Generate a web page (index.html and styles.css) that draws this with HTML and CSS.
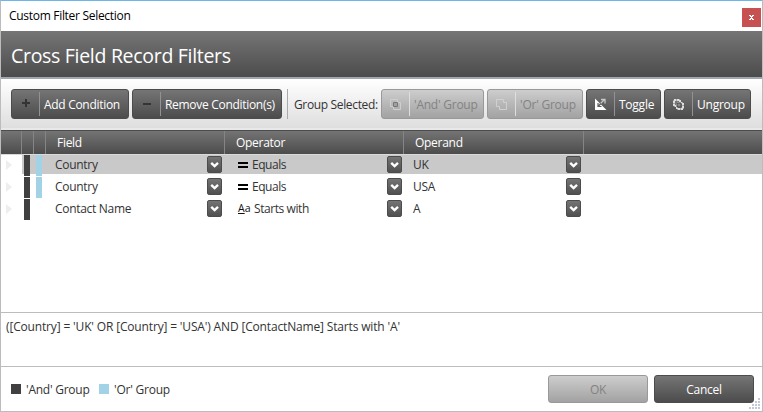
FILE: index.html
```html
<!DOCTYPE html>
<html lang="en">
<head>
<meta charset="utf-8">
<title>Custom Filter Selection</title>
<link rel="stylesheet" href="styles.css">
</head>
<body>
<svg class="defs" width="0" height="0"><defs>
<symbol id="chev" viewBox="0 0 15 17"><path d="M4.2 6.8 7.6 10l3.4-3.2" fill="none" stroke="#fff" stroke-width="2.4"/></symbol>
</defs></svg>
<div class="window">
  <div class="titlebar"><span class="t-title">Custom Filter Selection</span><button class="close"><svg width="19" height="19" viewBox="0 0 19 19"><path d="M7 7h2v1h1V7h2v1h-1v1h-1v1h1v1h1v1h-2v-1H9v1H7v-1h1v-1h1V9H8V8H7z" fill="#fff"/></svg></button></div>
  <div class="heading"><h1>Cross Field Record Filters</h1></div>
  <div class="toolbar">
    <button class="btn add"><span class="icon"><svg width="27" height="28" viewBox="0 0 27 28"><path d="M10 13h8M14 9v8" stroke="#343434" stroke-width="2"/></svg></span><span class="label">Add Condition</span></button>
    <button class="btn remove"><span class="icon"><svg width="27" height="28" viewBox="0 0 27 28"><path d="M10 14h8" stroke="#343434" stroke-width="2"/></svg></span><span class="label">Remove Condition(s)</span></button>
    <span class="sep"></span>
    <span class="group-label">Group Selected:</span>
    <button class="btn and disabled"><span class="icon"><svg width="27" height="28" viewBox="0 0 27 28"><path d="M8.500 9.500h7v7h-7zM11.500 12.500h7v7h-7z" fill="none" stroke="#cfcfcf"/><path d="M11.500 12.500h4v4h-4z" fill="#a0a0a0" stroke="#777"/></svg></span><span class="label">'And' Group</span></button>
    <button class="btn or disabled"><span class="icon"><svg width="27" height="28" viewBox="0 0 27 28"><path d="M8.500 9.500h7v3h3v7h-7v-3h-3z" fill="none" stroke="#d0d0d0"/></svg></span><span class="label">'Or' Group</span></button>
    <button class="btn toggle"><span class="icon"><svg width="27" height="28" viewBox="0 0 27 28"><path d="M8 8.500v11.500h11.500z" fill="#fff"/><path d="M11.500 15.500l6-6m-3.500 0h4v4" fill="none" stroke="#c8c8c8" stroke-width="1.300"/><path d="M11 13v3.500h3.500M11.500 16l2.500-2.500" fill="none" stroke="#5e5e5e" stroke-width="1.200"/></svg></span><span class="label">Toggle</span></button>
    <button class="btn ungroup"><span class="icon"><svg width="27" height="28" viewBox="0 0 27 28"><path d="M9 10h6v6H9zM12 13h6v6h-6z" fill="#777" stroke="#ddd" stroke-width="2" stroke-dasharray="2.500 .5"/><path d="M12 13h4v4h-4z" fill="#888" stroke="#444"/></svg></span><span class="label">Ungroup</span></button>
  </div>
  <div class="grid-head">
    <span></span><span></span><span></span><span><b class="h-field">Field</b></span><span><b class="h-operator">Operator</b></span><span><b class="h-operand">Operand</b></span><span></span>
  </div>
  <div class="rows">
    <div class="row selected">
      <span class="mark"></span><span class="g"><i class="bar dark"></i></span><span class="g"><i class="bar light"></i></span>
      <div class="cell"><span class="t-country">Country</span><button class="drop"><svg><use href="#chev"/></svg></button></div>
      <div class="cell op"><i class="eq"></i><span class="t-equals">Equals</span><button class="drop"><svg><use href="#chev"/></svg></button></div>
      <div class="cell"><span class="t-uk">UK</span><button class="drop"><svg><use href="#chev"/></svg></button></div>
    </div>
    <div class="row">
      <span class="mark"></span><span class="g"><i class="bar dark"></i></span><span class="g"><i class="bar light"></i></span>
      <div class="cell"><span class="t-country">Country</span><button class="drop"><svg><use href="#chev"/></svg></button></div>
      <div class="cell op"><i class="eq"></i><span class="t-equals">Equals</span><button class="drop"><svg><use href="#chev"/></svg></button></div>
      <div class="cell"><span class="t-usa">USA</span><button class="drop"><svg><use href="#chev"/></svg></button></div>
    </div>
    <div class="row">
      <span class="mark"></span><span class="g"><i class="bar dark"></i></span><span class="g"></span>
      <div class="cell"><span class="t-contact">Contact Name</span><button class="drop"><svg><use href="#chev"/></svg></button></div>
      <div class="cell op"><i class="aa"><u>A</u>a</i><span class="t-starts">Starts with</span><button class="drop"><svg><use href="#chev"/></svg></button></div>
      <div class="cell"><span>A</span><button class="drop"><svg><use href="#chev"/></svg></button></div>
    </div>
  </div>
  <div class="expression"><span class="t-expr">([Country] = 'UK' OR [Country] = 'USA') AND [ContactName] Starts with 'A'</span></div>
  <div class="footer">
    <i class="swatch dark"></i><span class="t-and">'And' Group</span>
    <i class="swatch light"></i><span class="t-or">'Or' Group</span>
    <button class="btn action ok disabled"><span class="t-ok">OK</span></button>
    <button class="btn action"><span class="t-cancel">Cancel</span></button>
    <svg class="grip" width="12" height="12" viewBox="0 0 12 12"><path d="M9 0h2v2H9zM6 3h2v2H6zM9 3h2v2H9zM3 6h2v2H3zM6 6h2v2H6zM9 6h2v2H9zM0 9h2v2H0zM3 9h2v2H3zM6 9h2v2H6zM9 9h2v2H9z" fill="#c2c9d8"/></svg>
  </div>
</div>
</body>
</html>
```
FILE: styles.css
```css
* { box-sizing: border-box; }
body { margin: 0; font: 12px/16px "Open Sans", "Noto Sans", sans-serif; color: #333; letter-spacing: -.3px; }
button { font: inherit; letter-spacing: inherit; padding: 0; margin: 0; border: 0; }
svg { display: block; }
.defs { position: absolute; }
span, b { white-space: nowrap; }
.window { width: 763px; height: 412px; border: 1px solid #bcbcbc; border-top-color: #6db7e8; background: #fff; display: flex; flex-direction: column; overflow: hidden; }
.titlebar { height: 30px; flex: none; display: flex; justify-content: space-between; padding: 7px 1px 0 8px; color: #000; }
.close { width: 19px; height: 19px; background: #c75050; }
.heading { height: 48px; flex: none; background: linear-gradient(#757575, #4c4c4c); border-bottom: 2px solid #a2a7ad; padding: 12px 0 0 10px; }
h1 { margin: 0; font-size: 19.5px; line-height: 26px; font-weight: 400; color: #fff; letter-spacing: -.3px; white-space: nowrap; }
.toolbar { height: 51px; flex: none; display: flex; padding: 10px 0 0 10px; background: linear-gradient(#fff, #dedede); border-bottom: 2px solid #e8e8e8; }
.btn { flex: none; height: 30px; display: flex; align-items: center; margin-right: 3px; color: #fff; border: 1px solid #4c4c4c; border-radius: 3px; background: linear-gradient(#757575, #4c4c4c); }
.btn.disabled { color: #838383; border-color: #999; background: linear-gradient(#cdcdcd, #a2a2a2); }
.icon { width: 28px; height: 24px; border-right: 1px solid #929292; display: flex; align-items: center; }
.disabled .icon { border-color: #dedede; }
.label { padding: 1px 0 0 4px; letter-spacing: -.24px; }
.add .label, .remove .label { letter-spacing: -.3px; }
.add { width: 118px; }
.remove { width: 150px; }
.and { width: 103px; }
.or { width: 96px; }
.toggle { width: 75px; }
.ungroup { width: 87px; }
.sep { width: 1px; height: 30px; margin: 0 6px 0 2px; background: #aaa; }
.group-label { width: 87px; padding-top: 8px; letter-spacing: -.35px; }
.grid-head { height: 25px; flex: none; display: grid; grid-template-columns: 21px 12px 12px 179px 179px 180px 1fr; background: linear-gradient(#747474, #4c4c4c); border-top: 1px solid #4c4c4c; border-bottom: 1px solid #dadada; color: #fff; }
.grid-head span { border-right: 1px solid #858585; padding: 4px 0 0 11px; }
.grid-head span:last-child { border: 0; }
.grid-head b { font-weight: 400; letter-spacing: -.28px; }
.rows { flex: none; height: 157px; }
.row { display: grid; grid-template-columns: 21px 13px 11px 179px 180px 179px; height: 22px; }
.row.selected { background: linear-gradient(90deg, #fff 21px, #c9c9c9 21px) 0 0 / 100% 19px no-repeat; }
.mark { margin: 5px 0 0 5px; width: 0; height: 0; border: 5px solid transparent; border-left: 6px solid #eeeeee; border-right: 0; }
.g { padding-left: 2px; }
.g + .g { padding-left: 1px; }
.bar { display: block; width: 6px; height: 21px; }
.dark { background: #404040; }
.light { background: #a1d2e5; }
.cell { display: flex; padding: 1px 3px 0 9px; line-height: 17px; }
.cell:last-child { padding-left: 8px; }
.drop { width: 15px; height: 17px; margin-left: auto; border: 1px solid #4c4c4c; border-radius: 2px; background: linear-gradient(#747474, #505050); }
.drop svg { width: 15px; height: 17px; margin: -1px; }
.op { padding-left: 13px; }
.t-equals { letter-spacing: -.45px; }
.t-starts { letter-spacing: -.42px; }
.eq { width: 10px; height: 6px; margin: 6px 4px 0 0; border: solid #000; border-width: 2px 0; }
.aa { width: 16px; font-style: normal; font-size: 10.5px; letter-spacing: 0; color: #111; }
.expression { flex: none; height: 55px; border: solid #bcbcbc; border-width: 1px 0; padding: 6px 5px; letter-spacing: -.16px; }
.footer { flex: 1; position: relative; display: flex; padding: 8px 5px 0 10px; line-height: 30px; }
.swatch { width: 10px; height: 10px; margin: 9px 5px 0 0; }
.t-and { width: 73px; letter-spacing: -.25px; }
.t-or { letter-spacing: -.22px; }
.action { width: 100px; height: 28px; justify-content: center; margin-right: 3px; padding-top: 1px; }
.action.ok { margin: 0 6px 0 auto; }
.grip { position: absolute; right: 1px; bottom: 1px; }
```
